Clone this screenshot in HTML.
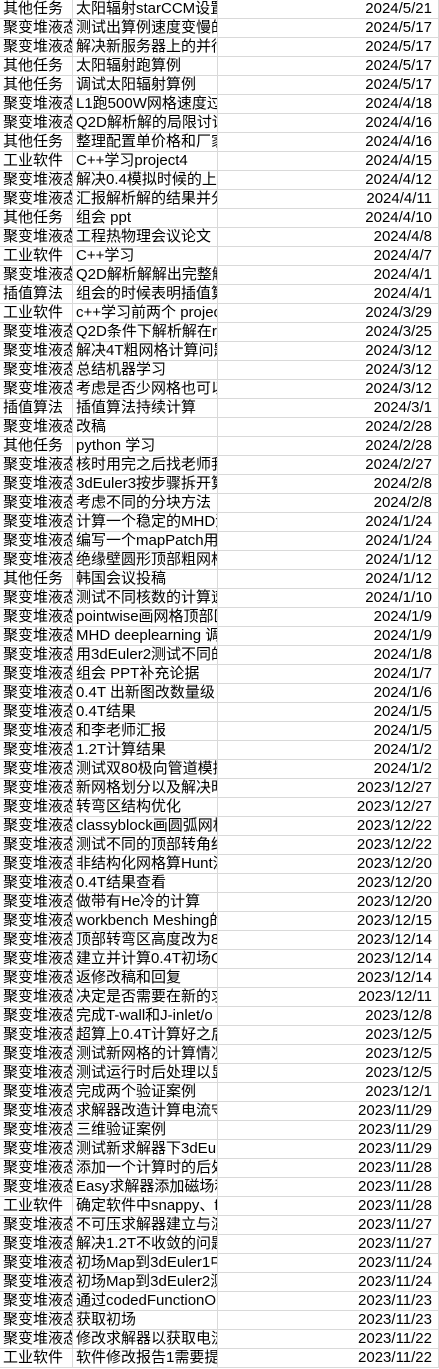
<!DOCTYPE html>
<html><head><meta charset="utf-8"><style>
html,body{margin:0;padding:0;background:#fff;width:439px;height:1369px;overflow:hidden}
table{border-collapse:collapse;table-layout:fixed;width:439px;font-family:"Liberation Sans","Noto Sans CJK SC",sans-serif;font-size:15px;color:#000}
td{height:18px;padding:0 0 0 4px;border:1px solid #d9d9d9;white-space:nowrap;overflow:hidden;line-height:18px;text-overflow:clip}
td:nth-child(1){width:69px;padding-left:3px}
td:nth-child(2){width:141px;padding-left:3px}
td:nth-child(3){text-align:right;padding-right:6px}
tr:first-child td{border-top:none}
td:first-child{border-left:none}
</style></head><body>
<table id="t"><tbody>
<tr><td>其他任务</td><td>太阳辐射starCCM设置</td><td>2024/5/21</td></tr>
<tr><td>聚变堆液态</td><td>测试出算例速度变慢的</td><td>2024/5/17</td></tr>
<tr><td>聚变堆液态</td><td>解决新服务器上的并行</td><td>2024/5/17</td></tr>
<tr><td>其他任务</td><td>太阳辐射跑算例</td><td>2024/5/17</td></tr>
<tr><td>其他任务</td><td>调试太阳辐射算例</td><td>2024/5/17</td></tr>
<tr><td>聚变堆液态</td><td>L1跑500W网格速度过</td><td>2024/4/18</td></tr>
<tr><td>聚变堆液态</td><td>Q2D解析解的局限讨论</td><td>2024/4/16</td></tr>
<tr><td>其他任务</td><td>整理配置单价格和厂家</td><td>2024/4/16</td></tr>
<tr><td>工业软件</td><td>C++学习project4</td><td>2024/4/15</td></tr>
<tr><td>聚变堆液态</td><td>解决0.4模拟时候的上</td><td>2024/4/12</td></tr>
<tr><td>聚变堆液态</td><td>汇报解析解的结果并分</td><td>2024/4/11</td></tr>
<tr><td>其他任务</td><td>组会 ppt</td><td>2024/4/10</td></tr>
<tr><td>聚变堆液态</td><td>工程热物理会议论文</td><td>2024/4/8</td></tr>
<tr><td>工业软件</td><td>C++学习</td><td>2024/4/7</td></tr>
<tr><td>聚变堆液态</td><td>Q2D解析解解出完整解</td><td>2024/4/1</td></tr>
<tr><td>插值算法</td><td>组会的时候表明插值算</td><td>2024/4/1</td></tr>
<tr><td>工业软件</td><td>c++学习前两个 project</td><td>2024/3/29</td></tr>
<tr><td>聚变堆液态</td><td>Q2D条件下解析解在r</td><td>2024/3/25</td></tr>
<tr><td>聚变堆液态</td><td>解决4T粗网格计算问题</td><td>2024/3/12</td></tr>
<tr><td>聚变堆液态</td><td>总结机器学习</td><td>2024/3/12</td></tr>
<tr><td>聚变堆液态</td><td>考虑是否少网格也可以</td><td>2024/3/12</td></tr>
<tr><td>插值算法</td><td>插值算法持续计算</td><td>2024/3/1</td></tr>
<tr><td>聚变堆液态</td><td>改稿</td><td>2024/2/28</td></tr>
<tr><td>其他任务</td><td>python 学习</td><td>2024/2/28</td></tr>
<tr><td>聚变堆液态</td><td>核时用完之后找老师我</td><td>2024/2/27</td></tr>
<tr><td>聚变堆液态</td><td>3dEuler3按步骤拆开算</td><td>2024/2/8</td></tr>
<tr><td>聚变堆液态</td><td>考虑不同的分块方法</td><td>2024/2/8</td></tr>
<tr><td>聚变堆液态</td><td>计算一个稳定的MHD流</td><td>2024/1/24</td></tr>
<tr><td>聚变堆液态</td><td>编写一个mapPatch用</td><td>2024/1/24</td></tr>
<tr><td>聚变堆液态</td><td>绝缘壁圆形顶部粗网格</td><td>2024/1/12</td></tr>
<tr><td>其他任务</td><td>韩国会议投稿</td><td>2024/1/12</td></tr>
<tr><td>聚变堆液态</td><td>测试不同核数的计算速</td><td>2024/1/10</td></tr>
<tr><td>聚变堆液态</td><td>pointwise画网格顶部区</td><td>2024/1/9</td></tr>
<tr><td>聚变堆液态</td><td>MHD deeplearning 调</td><td>2024/1/9</td></tr>
<tr><td>聚变堆液态</td><td>用3dEuler2测试不同的</td><td>2024/1/8</td></tr>
<tr><td>聚变堆液态</td><td>组会 PPT补充论据</td><td>2024/1/7</td></tr>
<tr><td>聚变堆液态</td><td>0.4T 出新图改数量级</td><td>2024/1/6</td></tr>
<tr><td>聚变堆液态</td><td>0.4T结果</td><td>2024/1/5</td></tr>
<tr><td>聚变堆液态</td><td>和李老师汇报</td><td>2024/1/5</td></tr>
<tr><td>聚变堆液态</td><td>1.2T计算结果</td><td>2024/1/2</td></tr>
<tr><td>聚变堆液态</td><td>测试双80极向管道模拟</td><td>2024/1/2</td></tr>
<tr><td>聚变堆液态</td><td>新网格划分以及解决时</td><td>2023/12/27</td></tr>
<tr><td>聚变堆液态</td><td>转弯区结构优化</td><td>2023/12/27</td></tr>
<tr><td>聚变堆液态</td><td>classyblock画圆弧网格</td><td>2023/12/22</td></tr>
<tr><td>聚变堆液态</td><td>测试不同的顶部转角结</td><td>2023/12/22</td></tr>
<tr><td>聚变堆液态</td><td>非结构化网格算Hunt流</td><td>2023/12/20</td></tr>
<tr><td>聚变堆液态</td><td>0.4T结果查看</td><td>2023/12/20</td></tr>
<tr><td>聚变堆液态</td><td>做带有He冷的计算</td><td>2023/12/20</td></tr>
<tr><td>聚变堆液态</td><td>workbench Meshing的</td><td>2023/12/15</td></tr>
<tr><td>聚变堆液态</td><td>顶部转弯区高度改为8</td><td>2023/12/14</td></tr>
<tr><td>聚变堆液态</td><td>建立并计算0.4T初场C</td><td>2023/12/14</td></tr>
<tr><td>聚变堆液态</td><td>返修改稿和回复</td><td>2023/12/14</td></tr>
<tr><td>聚变堆液态</td><td>决定是否需要在新的求</td><td>2023/12/11</td></tr>
<tr><td>聚变堆液态</td><td>完成T-wall和J-inlet/o</td><td>2023/12/8</td></tr>
<tr><td>聚变堆液态</td><td>超算上0.4T计算好之后</td><td>2023/12/5</td></tr>
<tr><td>聚变堆液态</td><td>测试新网格的计算情况</td><td>2023/12/5</td></tr>
<tr><td>聚变堆液态</td><td>测试运行时后处理以显</td><td>2023/12/5</td></tr>
<tr><td>聚变堆液态</td><td>完成两个验证案例</td><td>2023/12/1</td></tr>
<tr><td>聚变堆液态</td><td>求解器改造计算电流守</td><td>2023/11/29</td></tr>
<tr><td>聚变堆液态</td><td>三维验证案例</td><td>2023/11/29</td></tr>
<tr><td>聚变堆液态</td><td>测试新求解器下3dEul</td><td>2023/11/29</td></tr>
<tr><td>聚变堆液态</td><td>添加一个计算时的后处</td><td>2023/11/28</td></tr>
<tr><td>聚变堆液态</td><td>Easy求解器添加磁场和</td><td>2023/11/28</td></tr>
<tr><td>工业软件</td><td>确定软件中snappy、f</td><td>2023/11/28</td></tr>
<tr><td>聚变堆液态</td><td>不可压求解器建立与演</td><td>2023/11/27</td></tr>
<tr><td>聚变堆液态</td><td>解决1.2T不收敛的问题</td><td>2023/11/27</td></tr>
<tr><td>聚变堆液态</td><td>初场Map到3dEuler1中</td><td>2023/11/24</td></tr>
<tr><td>聚变堆液态</td><td>初场Map到3dEuler2测</td><td>2023/11/24</td></tr>
<tr><td>聚变堆液态</td><td>通过codedFunctionOb</td><td>2023/11/23</td></tr>
<tr><td>聚变堆液态</td><td>获取初场</td><td>2023/11/23</td></tr>
<tr><td>聚变堆液态</td><td>修改求解器以获取电流</td><td>2023/11/22</td></tr>
<tr><td>工业软件</td><td>软件修改报告1需要提</td><td>2023/11/22</td></tr>
</tbody></table>
</body></html>
